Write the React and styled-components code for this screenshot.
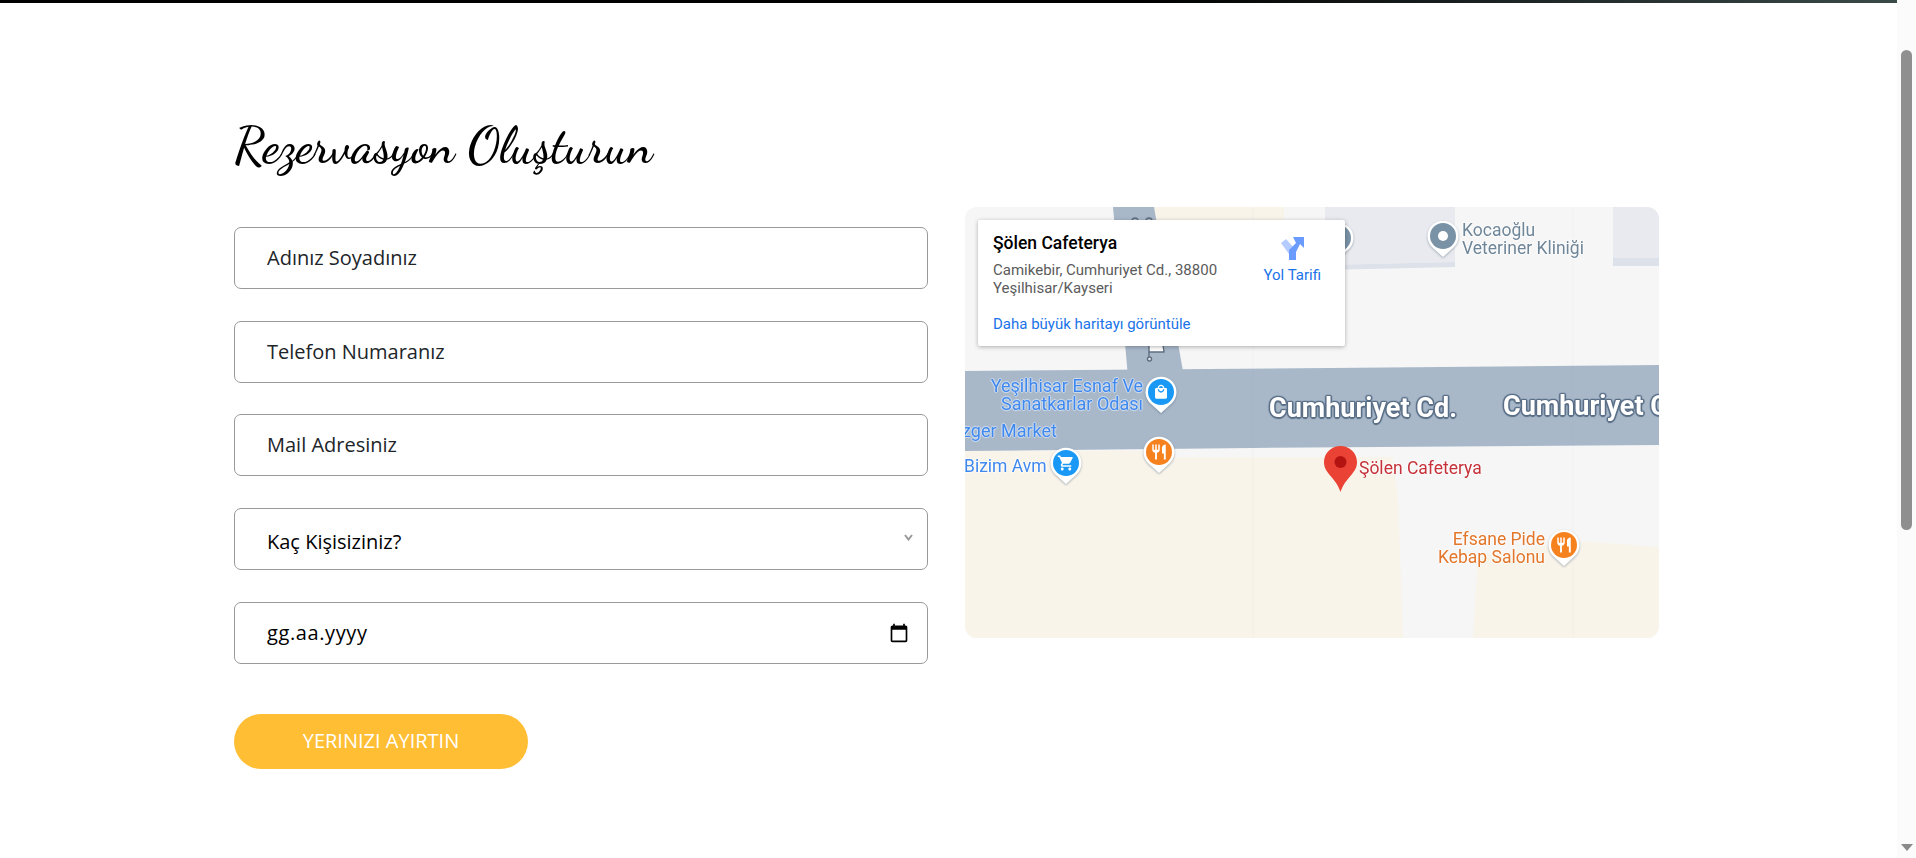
import React from "react";
import styled, { createGlobalStyle } from "styled-components";
import { MdRestaurant, MdShoppingCart, MdLocalMall } from "react-icons/md";

const GlobalStyle = createGlobalStyle`
  html, body {
    margin: 0;
    height: 100%;
    overflow: hidden;
    background: #fff;
  }
  * { box-sizing: border-box; }
`;

const Page = styled.div`
  display: flex;
  height: 858px;
  font-family: "Open Sans", "Liberation Sans", sans-serif;
`;

const Main = styled.main`
  flex: 1;
  min-width: 0;
`;

const TopBar = styled.div`
  height: 3px;
  background: linear-gradient(90deg, #000 0%, #000 60%, #3a4a48 100%);
`;

const Section = styled.section`
  padding: 109px 0 0 234px;
`;

const Heading = styled.h2`
  margin: 0;
  height: 95px;
  font-family: "Dancing Script", "Liberation Serif", cursive;
  font-weight: 600;
  font-size: 50.4px;
  line-height: 68px;
  color: #000;
`;

const Columns = styled.div`
  display: flex;
  gap: 37px;
  align-items: flex-start;
`;

const Form = styled.form`
  width: 694px;
  padding-top: 19.8px;
  display: flex;
  flex-direction: column;
  gap: 31.75px;
`;

const Field = styled.div`
  height: 62px;
  display: flex;
  align-items: center;
  padding: 0 18px 0 32px;
  border: 1px solid #999;
  border-radius: 7px;
  background: #fff;
`;

const Input = styled.input`
  flex: 1;
  min-width: 0;
  padding: 0;
  border: 0;
  outline: 0;
  background: transparent;
  font: 400 20px/26px "Open Sans", sans-serif;
  letter-spacing: ${(props) => (props.$dark ? "0.6px" : "0")};
  color: #212529;
  &::placeholder {
    color: ${(props) => (props.$dark ? "#000" : "#212529")};
    opacity: 1;
  }
`;

const Select = styled.select`
  flex: 1;
  min-width: 0;
  padding: 5px 0 0;
  border: 0;
  outline: 0;
  appearance: none;
  background: transparent;
  font: 400 20px/26px "Open Sans", sans-serif;
  color: #000;
`;

const Chevron = styled.svg`
  width: 9px;
  height: 7px;
  margin: -3px -4px 0 0;
`;

const CalendarIcon = styled.svg`
  width: 20px;
  height: 20px;
`;

const SubmitButton = styled.button`
  width: 294px;
  height: 55px;
  margin-top: 18.45px;
  border: 0;
  border-radius: 28px;
  background: #ffbe33;
  color: #fff;
  font: 400 20px/26px "Open Sans", sans-serif;
`;

const MapFrame = styled.div`
  position: relative;
  width: 694px;
  height: 431px;
  border-radius: 12px;
  overflow: hidden;
  background: #f6f6f6;
  font-family: Roboto, "Liberation Sans", sans-serif;
`;

const MapArt = styled.svg`
  display: block;
  width: 100%;
  height: 100%;
`;

const Label = styled.div`
  position: absolute;
  top: ${(props) => props.$top}px;
  ${(props) =>
    props.$right !== undefined ? `right: ${props.$right}px; text-align: right;` : `left: ${props.$left}px;`}
  font-size: ${(props) => props.$size || 17.5}px;
  line-height: 17.5px;
  white-space: pre;
  color: ${(props) => props.$color};
  filter: blur(0.35px);
  text-shadow: ${(props) => {
    const h = props.$halo || "rgba(255,255,255,.75)";
    return `1px 0 1px ${h}, -1px 0 1px ${h}, 0 1px 1px ${h}, 0 -1px 1px ${h}`;
  }};
`;

const RoadName = styled.div`
  position: absolute;
  top: ${(props) => props.$top}px;
  left: ${(props) => props.$left}px;
  font-size: 27px;
  line-height: 30px;
  font-weight: 700;
  white-space: pre;
  color: #fff;
  filter: blur(0.35px);
  text-shadow: 1.5px 0 1px #5a6f87, -1.5px 0 1px #5a6f87, 0 1.5px 1px #5a6f87, 0 -1.5px 1px #5a6f87,
    1px 1px 1px #5a6f87, -1px -1px 1px #5a6f87, 1px -1px 1px #5a6f87, -1px 1px 1px #5a6f87;
`;

const MarkerBox = styled.svg`
  position: absolute;
  left: ${(props) => props.$x - 17}px;
  top: ${(props) => props.$y - 17}px;
  width: 34px;
  height: 40px;
  filter: drop-shadow(0 1px 1px rgba(70, 90, 110, 0.45));
`;

const RedPin = styled.svg`
  position: absolute;
  left: 359px;
  top: 239px;
  width: 33px;
  height: 46px;
`;

const InfoCard = styled.div`
  position: absolute;
  left: 13px;
  top: 13px;
  width: 367px;
  height: 126px;
  display: flex;
  justify-content: space-between;
  padding: 12px 24px 0 15px;
  background: #fff;
  border-radius: 2px;
  box-shadow: 0 1px 4px rgba(0, 0, 0, 0.3);
`;

const PlaceInfo = styled.div`
  display: flex;
  flex-direction: column;
`;

const PlaceName = styled.div`
  font-size: 17.5px;
  line-height: 22px;
  font-weight: 500;
  color: #000;
`;

const Address = styled.div`
  margin-top: 7px;
  width: 240px;
  font-size: 15px;
  line-height: 18px;
  color: #5b5b5b;
`;

const BigMapLink = styled.a`
  margin-top: 18px;
  font-size: 15px;
  line-height: 18px;
  color: #1a73e8;
`;

const Directions = styled.a`
  display: flex;
  flex-direction: column;
  align-items: center;
  padding-top: 5px;
  font-size: 15px;
  line-height: 18px;
  color: #1a73e8;
`;

const DirectionIcon = styled.svg`
  width: 23px;
  height: 23px;
  margin-bottom: 6px;
`;

const ScrollTrack = styled.div`
  width: 19px;
  height: 858px;
  background: #fbfbfb;
  display: flex;
  flex-direction: column;
  align-items: center;
  padding-top: 50px;
`;

const ScrollThumb = styled.div`
  width: 11px;
  height: 480px;
  border-radius: 6px;
  background: #8f8f8f;
`;

const ScrollArrow = styled.div`
  margin-top: 314px;
  width: 0;
  height: 0;
  border-left: 6.5px solid transparent;
  border-right: 6.5px solid transparent;
  border-top: 7px solid #8a8a8a;
`;

function Marker({ x, y, color, children }) {
  return (
    <MarkerBox $x={x} $y={y} viewBox="0 0 34 40">
      <path d="M17 38 L7 29 A15.5 15.5 0 1 1 27 29 Z" fill="#fff" />
      <circle cx="17" cy="17" r="13" fill={color} />
      {children}
    </MarkerBox>
  );
}

function MapView() {
  return (
    <MapFrame>
      <MapArt viewBox="0 0 694 431">
        <polygon points="189,0 319,0 319,40 189,40" fill="#f8f4ea" />
        <polygon points="360,0 490,0 490,55 360,58" fill="#e8eaef" />
        <polygon points="360,58 490,55 490,60 360,63" fill="#dde1e9" />
        <polygon points="648,0 694,0 694,51 648,51" fill="#e8eaef" />
        <polygon points="648,51 694,51 694,59 648,59" fill="#dde1e9" />
        <polygon points="0,244 210,244 210,250 427,250 433,288 438,431 0,431" fill="#f8f4ea" />
        <polygon points="513,349 613,334 694,340 694,431 508,431" fill="#f8f4ea" />
        <polygon points="148,0 189,0 219,170 163,170" fill="#a8b8c9" />
        <polygon points="0,164 365,161 694,158 694,238 288,241 0,244" fill="#a8b8c9" />
        <line x1="288" y1="0" x2="288" y2="431" stroke="#8f9fb0" strokeOpacity="0.06" />
        <line x1="608" y1="0" x2="608" y2="431" stroke="#8f9fb0" strokeOpacity="0.06" />
        <g stroke="#5f6f80" strokeWidth="1.4" strokeLinejoin="round">
          <path d="M184 138 h14 l1 7 h-15 z" fill="#fff" />
          <path d="M184 145 v5" fill="none" />
          <circle cx="184.5" cy="152" r="2" fill="#dfe5ec" />
          <circle cx="170" cy="14" r="3" fill="none" />
          <circle cx="184" cy="14" r="3" fill="none" />
        </g>
      </MapArt>

      <Marker x={373} y={31} color="#7a92a6">
        <circle cx="17" cy="17" r="5" fill="#fff" />
      </Marker>
      <Marker x={478} y={29} color="#7a92a6">
        <circle cx="17" cy="17" r="5" fill="#fff" />
      </Marker>
      <Marker x={196} y={185} color="#1a98f6">
        <MdLocalMall x="9" y="9" size="16" color="#fff" />
      </Marker>
      <Marker x={194} y={245} color="#f5821f">
        <MdRestaurant x="8" y="8" size="18" color="#fff" />
      </Marker>
      <Marker x={101} y={256} color="#1a98f6">
        <MdShoppingCart x="8" y="8" size="18" color="#fff" />
      </Marker>
      <Marker x={599} y={338} color="#f5821f">
        <MdRestaurant x="8" y="8" size="18" color="#fff" />
      </Marker>

      <Label $left={497} $top={15} $color="#6f8699">{"Kocaoğlu\nVeteriner Kliniği"}</Label>
      <Label $right={516} $top={170} $size={18} $color="#3f88ee" $halo="rgba(225,235,250,.7)">
        {"Yeşilhisar Esnaf Ve\nSanatkarlar Odası"}
      </Label>
      <Label $right={602} $top={215} $size={18} $color="#3f88ee" $halo="rgba(225,235,250,.7)">Özger Market</Label>
      <Label $left={-1} $top={251} $color="#3f88ee">Bizim Avm</Label>
      <Label $left={394} $top={253} $color="#c5323a">Şölen Cafeterya</Label>
      <Label $right={114} $top={324} $color="#e2762b">{"Efsane Pide\nKebap Salonu"}</Label>

      <RoadName $left={304} $top={186}>Cumhuriyet Cd.</RoadName>
      <RoadName $left={538} $top={184}>Cumhuriyet Cd.</RoadName>

      <RedPin viewBox="0 0 33 46">
        <path
          d="M16.5 0 C7.4 0 0 7.2 0 16.2 C0 22 3 25.5 6.6 30 C10.5 34.6 14.2 39 16.5 46 C18.8 39 22.5 34.6 26.4 30 C30 25.5 33 22 33 16.2 C33 7.2 25.6 0 16.5 0 Z"
          fill="#ea4335"
        />
        <circle cx="16.5" cy="16" r="6" fill="#b31412" />
      </RedPin>

      <InfoCard>
        <PlaceInfo>
          <PlaceName>Şölen Cafeterya</PlaceName>
          <Address>Camikebir, Cumhuriyet Cd., 38800 Yeşilhisar/Kayseri</Address>
          <BigMapLink>Daha büyük haritayı görüntüle</BigMapLink>
        </PlaceInfo>
        <Directions>
          <DirectionIcon viewBox="0 0 23 23">
            <polygon points="0,6 5,2 14,12 15,17 8,17" fill="#b4ccff" />
            <polygon points="8,23 8,13 15,6 12,0 23,0 23,11 19,7 15,15 15,23" fill="#6a9bff" />
          </DirectionIcon>
          Yol Tarifi
        </Directions>
      </InfoCard>
    </MapFrame>
  );
}

export default function App() {
  return (
    <Page>
      <GlobalStyle />
      <Main>
        <TopBar />
        <Section>
          <Heading>Rezervasyon Oluşturun</Heading>
          <Columns>
            <Form onSubmit={(e) => e.preventDefault()}>
              <Field>
                <Input placeholder="Adınız Soyadınız" />
              </Field>
              <Field>
                <Input placeholder="Telefon Numaranız" />
              </Field>
              <Field>
                <Input placeholder="Mail Adresiniz" />
              </Field>
              <Field>
                <Select defaultValue="">
                  <option value="">Kaç Kişisiziniz?</option>
                  <option value="2">2</option>
                  <option value="3">3</option>
                  <option value="4">4</option>
                </Select>
                <Chevron viewBox="0 0 9 7">
                  <path d="M1 1 L4.5 5.5 L8 1" fill="none" stroke="#999" strokeWidth="2" />
                </Chevron>
              </Field>
              <Field>
                <Input placeholder="gg.aa.yyyy" $dark />
                <CalendarIcon viewBox="0 0 24 24">
                  <path d="M20 3h-1V1h-2v2H7V1H5v2H4c-1.1 0-2 .9-2 2v16c0 1.1.9 2 2 2h16c1.1 0 2-.9 2-2V5c0-1.1-.9-2-2-2zm0 18H4V8h16v13z" />
                </CalendarIcon>
              </Field>
              <SubmitButton>YERINIZI AYIRTIN</SubmitButton>
            </Form>
            <MapView />
          </Columns>
        </Section>
      </Main>
      <ScrollTrack>
        <ScrollThumb />
        <ScrollArrow />
      </ScrollTrack>
    </Page>
  );
}
